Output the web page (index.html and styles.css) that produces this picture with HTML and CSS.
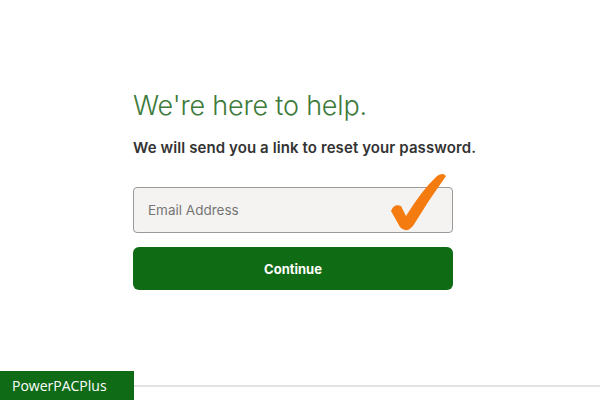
FILE: index.html
```html
<!DOCTYPE html>
<html>
<head>
<meta charset="utf-8">
<link rel="stylesheet" href="styles.css">
</head>
<body>
<main class="page">
  <section class="form">
    <h1 class="title">We're here to help.</h1>
    <p class="lead">We will send you a link to reset your password.</p>
    <div class="field">
      <input class="input" type="text" placeholder="Email Address">
      <svg class="check" width="60" height="64" viewBox="0 0 60 64">
        <path d="M1,40 Q4,32 11,35 L16,45 Q32,19 47,5 Q53,1 56,5 Q38,30 23,55 Q16,63 10,56 Z" fill="#f47b0f"/>
      </svg>
    </div>
    <button class="btn">Continue</button>
  </section>
  <footer class="footer">
    <div class="brand">PowerPACPlus</div>
    <div class="rule"></div>
  </footer>
</main>
</body>
</html>
```
FILE: styles.css
```css
html, body {
  margin: 0;
  padding: 0;
  background: #fff;
}
.page {
  width: 600px;
  height: 400px;
  display: flex;
  flex-direction: column;
  overflow: hidden;
}
.form {
  flex: 1;
  padding: 88px 0 0 133px;
  width: 320px;
}
.title {
  margin: 0;
  font-family: "Inter", sans-serif;
  font-weight: 300;
  font-size: 27px;
  line-height: 36px;
  color: #3d7a3a;
  letter-spacing: -0.2px;
}
.lead {
  margin: 14px 0 0;
  font-family: "Inter", sans-serif;
  font-weight: 600;
  font-size: 15px;
  line-height: 20px;
  color: #333;
  letter-spacing: 0.1px;
  white-space: nowrap;
}
.field {
  position: relative;
  margin-top: 29px;
}
.input {
  box-sizing: border-box;
  width: 320px;
  height: 46px;
  border: 1px solid #9a9a9a;
  border-radius: 4px;
  background: #f4f3f1;
  padding: 0 14px;
  font-family: "Inter", sans-serif;
  font-size: 13.5px;
  color: #333;
  outline: none;
}
.input::placeholder {
  color: #757575;
}
.check {
  position: absolute;
  left: 257px;
  top: -16px;
}
.btn {
  display: block;
  box-sizing: border-box;
  width: 320px;
  height: 43px;
  margin-top: 14px;
  border: none;
  border-radius: 6px;
  background: #106b15;
  color: #fff;
  font-family: "Inter", sans-serif;
  font-weight: 700;
  font-size: 13px;
}
.footer {
  display: flex;
  align-items: center;
  height: 29px;
}
.brand {
  background: #0f6b16;
  color: #fff;
  font-family: "Open Sans", sans-serif;
  font-size: 14px;
  height: 29px;
  line-height: 30px;
  width: 134px;
  padding-left: 12px;
  box-sizing: border-box;
}
.rule {
  flex: 1;
  height: 2px;
  background: #e2e2e2;
}
```
